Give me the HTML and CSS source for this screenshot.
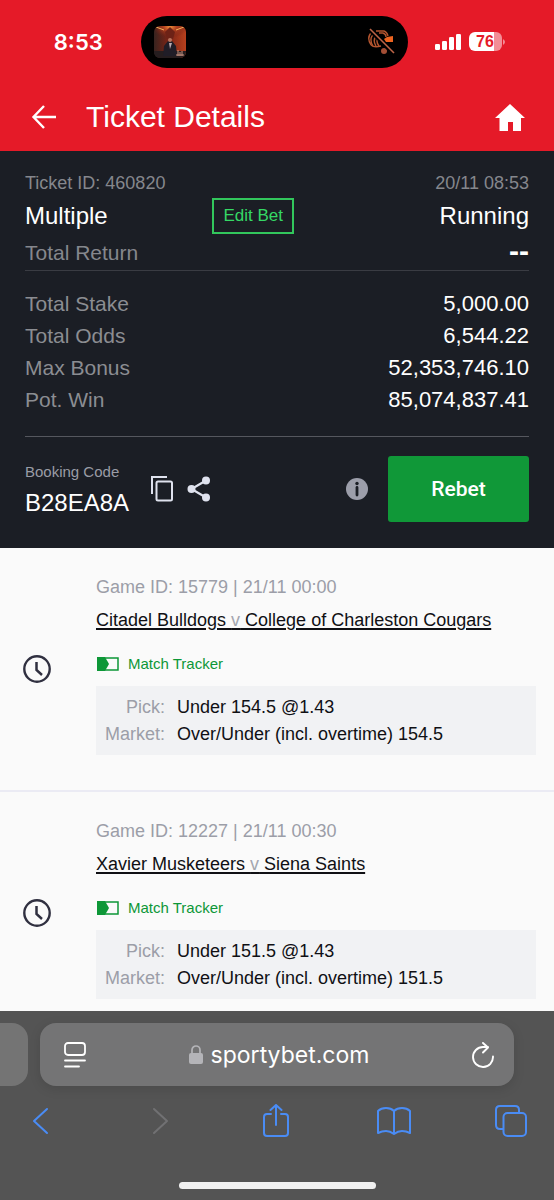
FILE: index.html
```html
<!DOCTYPE html>
<html lang="en">
<head>
<meta charset="utf-8">
<meta name="viewport" content="width=device-width, initial-scale=1">
<title>Ticket Details</title>
<link rel="stylesheet" href="styles.css">
</head>
<body>
<div class="status-bar">
  <span class="clock-time">8:53</span>
  <div class="island">
    <svg class="cover" width="32" height="32" viewBox="0 0 32 32" aria-hidden="true">
      <defs>
        <clipPath id="coverClip"><rect width="32" height="32" rx="6"/></clipPath>
        <radialGradient id="glow" cx="0.5" cy="0.05" r="0.55"><stop offset="0" stop-color="#f0913c"/><stop offset="0.35" stop-color="#b34320"/><stop offset="1" stop-color="#6d1d15" stop-opacity="0"/></radialGradient>
        <linearGradient id="coverBase" x1="0" x2="1"><stop offset="0" stop-color="#37231f"/><stop offset="0.45" stop-color="#7b2416"/><stop offset="1" stop-color="#b6401d"/></linearGradient>
      </defs>
      <g clip-path="url(#coverClip)">
        <rect width="32" height="32" fill="url(#coverBase)"/>
        <path d="M0 25h32v7H0z" fill="#251d1f"/>
        <rect width="32" height="20" fill="url(#glow)"/>
        <path d="M11 6l5-5 5 5-2 7h-6z" fill="#6d2216"/>
        <path d="M2 1l8 3M30 1l-8 3" stroke="#f4b25b" stroke-width="1"/>
        <path d="M9 30l1-10 4-5q2-3 4 0l4 5 1 10z" fill="#201d27"/>
        <circle cx="16" cy="14" r="2" fill="#b9745e"/>
        <path d="M15 17l1 6 2-6z" fill="#b9aab0"/>
        <path d="M24 24v6M26 26v4M28 25v5M22 29h8" stroke="#c99583" stroke-width="1"/>
      </g>
    </svg>
    <svg width="28" height="28" viewBox="0 0 28 28" fill="none" aria-hidden="true">
      <g stroke="#b4552f" stroke-width="1.4">
        <path d="M5 4Q-1 9 4 17M8 5Q1 10 6 18M10 7Q5 12 9 18M12 9Q8 13 12 18"/>
        <path d="M9 3h8q3 1 4 5M12 5h4q3 1 3 4M4 17q3 3 10 1"/>
      </g>
      <path d="M20 9l6-1v6h-7l-2-3z" fill="#ed6420"/>
      <circle cx="17" cy="23" r="3" fill="#a34e35"/>
      <path d="M3 2l24 24" stroke="#000" stroke-width="4"/>
      <path d="M3 1l24 24" stroke="#bd6547" stroke-width="1.6"/>
    </svg>
  </div>
  <div class="status-icons">
    <svg width="26" height="18" viewBox="0 0 26 18" fill="#fff" aria-hidden="true"><rect y="11" width="5" height="6" rx="1.3"/><rect x="7" y="8" width="5" height="9" rx="1.3"/><rect x="14" y="4" width="5" height="13" rx="1.3"/><rect x="21" y="1" width="5" height="16" rx="1.3"/></svg>
    <span class="battery">76</span>
    <svg class="battery-tip" width="2" height="6" viewBox="0 0 2 6" aria-hidden="true"><path d="M0 0q4 3 0 6z" fill="#f38d96"/></svg>
  </div>
</div>

<header class="header">
  <button class="icon-button" type="button" aria-label="Back">
    <svg width="26" height="24" viewBox="0 0 26 24" fill="none" stroke="#fff" stroke-width="2.4"><path d="M25 12H3M13 1L2.500 12 13 23"/></svg>
  </button>
  <h1 class="title">Ticket Details</h1>
  <a class="home-link" href="#" aria-label="Home">
    <svg width="30" height="27" viewBox="0 0 30 27" fill="#fff"><path d="M15 0l15 14h-4v13h-8v-9h-5v9H4.500V14H0z"/></svg>
  </a>
</header>

<section class="ticket">
  <div class="summary">
    <div class="row small"><span>Ticket ID: 460820</span><span>20/11 08:53</span></div>
    <div class="row kind">
      <span class="kind-name">Multiple</span>
      <button class="edit-button" type="button">Edit Bet</button>
      <span class="state">Running</span>
    </div>
    <div class="row return"><span>Total Return</span><strong class="dashes">--</strong></div>
  </div>
  <dl class="totals">
    <div class="row"><dt>Total Stake</dt><dd>5,000.00</dd></div>
    <div class="row"><dt>Total Odds</dt><dd>6,544.22</dd></div>
    <div class="row"><dt>Max Bonus</dt><dd>52,353,746.10</dd></div>
    <div class="row"><dt>Pot. Win</dt><dd>85,074,837.41</dd></div>
  </dl>
  <div class="booking">
    <div>
      <div class="booking-label">Booking Code</div>
      <div class="booking-code">B28EA8A</div>
    </div>
    <div class="booking-tools">
      <button class="icon-button" type="button" aria-label="Copy">
        <svg width="22" height="26" viewBox="0 0 22 26" fill="none" stroke="#dfe2ee" stroke-width="2"><path d="M1 18V1h15"/><rect x="5.500" y="5.500" width="15.500" height="19" rx="1.500"/></svg>
      </button>
      <button class="icon-button" type="button" aria-label="Share">
        <svg width="24" height="26" viewBox="0 0 24 26" fill="#dfe2ee" stroke="#dfe2ee"><path d="M19 4.500L4.500 13 19 21.500" fill="none" stroke-width="2.200"/><g stroke="none"><circle cx="19" cy="4.500" r="4"/><circle cx="4.500" cy="13" r="4"/><circle cx="19" cy="21.500" r="4"/></g></svg>
      </button>
    </div>
    <button class="icon-button info" type="button" aria-label="Information">
      <svg width="22" height="22" viewBox="0 0 22 22"><circle cx="11" cy="11" r="11" fill="#9c9eaa"/><circle cx="11" cy="5.500" r="1.700" fill="#1b1e25"/><path d="M11 9.500v7.500" stroke="#1b1e25" stroke-width="2.800" stroke-linecap="round"/></svg>
    </button>
    <button class="rebet" type="button">Rebet</button>
  </div>
</section>

<main class="games">
  <article class="game">
    <svg class="pending" width="28" height="28" viewBox="0 0 28 28" fill="none" stroke="#303040" aria-label="Pending"><circle cx="14" cy="14" r="12.700" stroke-width="2.400"/><path d="M13.500 7v8l5.500 5" stroke-width="2.500"/></svg>
    <div class="game-body">
      <div class="game-id">Game ID: 15779 | 21/11 00:00</div>
      <a class="teams" href="#">Citadel Bulldogs <span class="versus">v</span> College of Charleston Cougars</a>
      <a class="tracker" href="#">
        <svg width="22" height="14" viewBox="0 0 22 14" aria-hidden="true"><path d="M1 1h20v12H1z" fill="none" stroke="#0d9737" stroke-width="1.500"/><path d="M0 0h8l4 7-4 7H0z" fill="#0d9737"/></svg>
        Match Tracker</a>
      <dl class="pick">
        <dt>Pick:</dt><dd>Under 154.5 @1.43</dd>
        <dt>Market:</dt><dd>Over/Under (incl. overtime) 154.5</dd>
      </dl>
    </div>
  </article>
  <article class="game">
    <svg class="pending" width="28" height="28" viewBox="0 0 28 28" fill="none" stroke="#303040" aria-label="Pending"><circle cx="14" cy="14" r="12.700" stroke-width="2.400"/><path d="M13.500 7v8l5.500 5" stroke-width="2.500"/></svg>
    <div class="game-body">
      <div class="game-id">Game ID: 12227 | 21/11 00:30</div>
      <a class="teams" href="#">Xavier Musketeers <span class="versus">v</span> Siena Saints</a>
      <a class="tracker" href="#">
        <svg width="22" height="14" viewBox="0 0 22 14" aria-hidden="true"><path d="M1 1h20v12H1z" fill="none" stroke="#0d9737" stroke-width="1.500"/><path d="M0 0h8l4 7-4 7H0z" fill="#0d9737"/></svg>
        Match Tracker</a>
      <dl class="pick">
        <dt>Pick:</dt><dd>Under 151.5 @1.43</dd>
        <dt>Market:</dt><dd>Over/Under (incl. overtime) 151.5</dd>
      </dl>
    </div>
  </article>
</main>

<footer class="browser">
  <div class="tabs">
    <div class="previous-tab"></div>
    <div class="address">
      <button class="icon-button" type="button" aria-label="Page menu">
        <svg width="22" height="26" viewBox="0 0 22 26" fill="none" stroke="#fff" stroke-width="1.800" stroke-linecap="round"><rect x="1" y="1" width="20" height="12" rx="3"/><path d="M1 18.500h20M1 24.500h14"/></svg>
      </button>
      <div class="domain">
        <svg width="14" height="19" viewBox="0 0 14 19" aria-hidden="true"><rect y="8" width="14" height="11" rx="2" fill="#b4b4b8"/><path d="M3 9V5a4 4 0 0 1 8 0v4" fill="none" stroke="#b4b4b8" stroke-width="1.700"/></svg>
        <span>sportybet.com</span>
      </div>
      <button class="icon-button" type="button" aria-label="Reload">
        <svg width="22" height="26" viewBox="0 0 22 26" fill="none" stroke="#fff" stroke-width="1.900" stroke-linecap="round" stroke-linejoin="round"><path d="M21 14.500A10 10 0 1 1 11 5h5M11 1l5 4.500-5 5"/></svg>
      </button>
    </div>
  </div>
  <nav class="toolbar" aria-label="Browser">
    <button class="tool" type="button" aria-label="Back"><svg width="32" height="34" viewBox="0 0 32 34"><path d="M20 5L7 17l13 12"/></svg></button>
    <button class="tool off" type="button" aria-label="Forward" disabled><svg width="32" height="34" viewBox="0 0 32 34"><path d="M10 5l13 12-13 12"/></svg></button>
    <button class="tool" type="button" aria-label="Share"><svg width="32" height="34" viewBox="0 0 32 34"><path d="M11 10H7q-3 0-3 3v16q0 3 3 3h18q3 0 3-3V13q0-3-3-3h-4M16 21V1M10.500 6L16 1l5.500 5"/></svg></button>
    <button class="tool" type="button" aria-label="Bookmarks"><svg width="34" height="34" viewBox="0 0 34 34"><path d="M17 30V7Q14 4 9 4 4 4 1 7v22q4-2 8-2t8 3q4-3 8-3t8 2V7q-3-3-8-3t-8 3"/></svg></button>
    <button class="tool" type="button" aria-label="Tabs"><svg width="32" height="34" viewBox="0 0 32 34"><path d="M8 25H5q-4 0-4-4V6q0-4 4-4h15q4 0 4 4v3"/><rect x="8.500" y="9" width="22.500" height="23" rx="4"/></svg></button>
  </nav>
  <div class="home-indicator"></div>
</footer>
</body>
</html>
```
FILE: styles.css
```css
* { box-sizing: border-box; }

body {
  margin: 0;
  height: 100vh;
  display: flex;
  flex-direction: column;
  background: #fafafa;
  color: #101014;
  font-family: "Liberation Sans", Arial, sans-serif;
}

h1, dl, dd { margin: 0; }
svg { display: block; }

button {
  font-family: inherit;
  cursor: pointer;
}

.icon-button,
.tool {
  padding: 0;
  border: 0;
  background: none;
}

.status-bar,
.header {
  flex: none;
  background: #e51a28;
  color: #fff;
}

.status-bar {
  display: grid;
  grid-template-columns: 1fr 267px 1fr;
  align-items: center;
  height: 83px;
  padding-right: 6px;
}

.clock-time {
  padding-left: 16px;
  font-family: Inter, sans-serif;
  font-size: 22px;
  font-weight: 600;
  text-align: center;
}

.island {
  display: flex;
  align-items: center;
  justify-content: space-between;
  height: 52px;
  padding: 0 13px;
  border-radius: 26px;
  background: #000;
}

.status-icons {
  display: flex;
  align-items: center;
  padding-left: 27px;
}

.battery {
  width: 33px;
  height: 19px;
  margin-left: 8px;
  border-radius: 6px;
  background: linear-gradient(to right, #fff 76%, #f38d96 76%);
  color: #e51a28;
  font-size: 16px;
  font-weight: 700;
  line-height: 19px;
  text-align: center;
}

.battery-tip { margin-left: 1px; }

.header {
  display: flex;
  align-items: center;
  height: 68px;
  padding: 0 29px 0 31px;
}

.title {
  flex: 1;
  padding-left: 29px;
  font-size: 30px;
  font-weight: 400;
  line-height: 36px;
}

.ticket {
  flex: none;
  padding: 18px 25px 26px;
  background: #1b1e25;
  color: #fff;
}

.row {
  display: flex;
  align-items: center;
  justify-content: space-between;
}

.summary { border-bottom: 1px solid #3a3c43; }

.small {
  height: 28px;
  color: #85878d;
  font-size: 18px;
}

.kind {
  height: 38px;
  font-size: 24px;
}

.kind-name { width: 37%; }

.edit-button {
  height: 36px;
  margin-left: 1px;
  padding: 0 9px;
  border: 2px solid #32c75c;
  background: none;
  color: #35d865;
  font-size: 17px;
}

.state {
  flex: 1;
  text-align: right;
}

.return {
  height: 35px;
  color: #85878d;
  font-size: 21px;
}

.dashes {
  color: #fff;
  font-size: 30px;
  line-height: 30px;
  padding-bottom: 4px;
}

.totals {
  padding: 17px 0 20px;
  border-bottom: 1px solid #55575e;
  line-height: 32px;
}

.totals dt {
  color: #8b8d92;
  font-size: 21px;
}

.totals dd { font-size: 22px; }

.booking {
  display: flex;
  align-items: center;
  padding-top: 19px;
}

.booking-label {
  color: #9a9ca6;
  font-size: 15px;
  line-height: 28px;
}

.booking-code {
  font-size: 24px;
  line-height: 34px;
}

.booking-tools {
  display: flex;
  gap: 14px;
  padding-left: 22px;
}

.info {
  margin-left: auto;
  margin-right: 20px;
}

.rebet {
  width: 28%;
  height: 66px;
  border: 0;
  border-radius: 3px;
  background: #109838;
  color: #fff;
  font-family: Roboto, sans-serif;
  font-size: 21px;
  font-weight: 500;
}

.games {
  flex: 1;
  min-height: 0;
  overflow: auto;
  scrollbar-width: none;
}

.game {
  display: flex;
  align-items: center;
  padding: 0 18px 0 23px;
  border-bottom: 2px solid #ebebf4;
}

.pending { flex: none; }

.game-body {
  flex: 1;
  padding: 25px 0 35px 45px;
}

.game-id {
  color: #9c9ea8;
  font-size: 18px;
  line-height: 28px;
}

.teams {
  display: block;
  color: #101014;
  font-size: 18px;
  line-height: 38px;
  text-decoration-thickness: 2px;
  text-underline-offset: 2px;
}

.versus { color: #a4a6af; }

.tracker {
  display: flex;
  align-items: center;
  gap: 9px;
  margin-top: 12px;
  padding-left: 1px;
  color: #0d9737;
  font-size: 15px;
  line-height: 26px;
  text-decoration: none;
}

.pick {
  display: grid;
  grid-template-columns: 69px 1fr;
  column-gap: 12px;
  margin-top: 9px;
  padding: 8px 0 7px;
  background: #f1f2f4;
  font-size: 18px;
  line-height: 27px;
}

.pick dt {
  color: #9c9ea8;
  text-align: right;
}

.browser {
  flex: none;
  padding: 12px 0 11px;
  background: #545454;
}

.tabs {
  display: flex;
  gap: 12px;
  padding-right: 40px;
}

.previous-tab {
  width: 28px;
  border-radius: 0 16px 16px 0;
  background: #747474;
}

.address {
  flex: 1;
  display: flex;
  align-items: center;
  justify-content: space-between;
  height: 63px;
  padding: 0 20px 0 24px;
  border-radius: 16px;
  background: #747475;
  box-shadow: 0 3px 12px rgba(0, 0, 0, 0.12);
}

.domain {
  display: flex;
  align-items: center;
  gap: 8px;
  color: #fff;
  font-family: Inter, sans-serif;
  font-size: 23px;
}

.toolbar {
  display: flex;
  align-items: center;
  justify-content: space-between;
  height: 70px;
  padding: 0 27px;
}

.tool svg {
  fill: none;
  stroke: #4a8cf5;
  stroke-width: 2;
  stroke-linecap: round;
  stroke-linejoin: round;
}

.off svg { stroke: #717173; }

.home-indicator {
  width: 197px;
  height: 7px;
  margin: 26px auto 0;
  border-radius: 4px;
  background: #f1f1f1;
}
```
